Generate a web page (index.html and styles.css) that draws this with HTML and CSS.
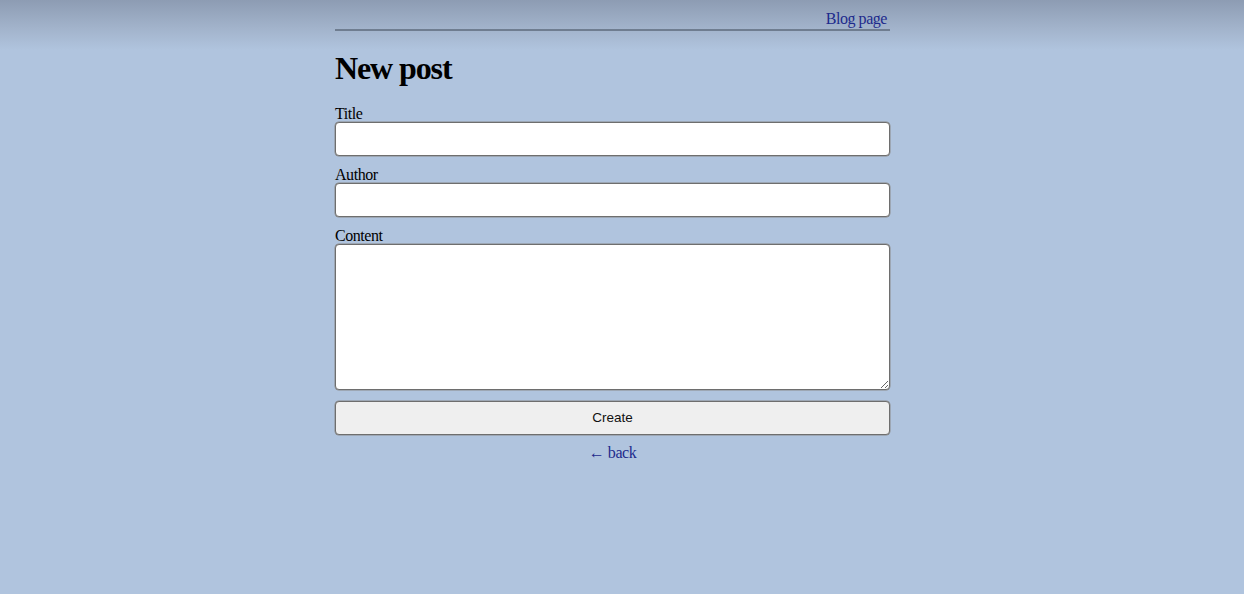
FILE: index.html
```html
<!DOCTYPE html>
<html>
<head>
<meta charset="utf-8">
<link rel="stylesheet" href="styles.css">
</head>
<body>
<div class="page">
  <header class="topbar">
    <a class="link" href="#">Blog page</a>
  </header>
  <h1 class="heading">New post</h1>
  <form class="form">
    <label class="label" for="title">Title</label>
    <input class="field" id="title" type="text">
    <label class="label" for="author">Author</label>
    <input class="field" id="author" type="text">
    <label class="label" for="content">Content</label>
    <textarea class="field area" id="content"></textarea>
    <button class="btn" type="button">Create</button>
  </form>
  <div class="back"><a class="link" href="#">← back</a></div>
</div>
</body>
</html>
```

FILE: styles.css
```css
html, body {
  margin: 0;
  padding: 0;
}
body {
  min-height: 594px;
  padding-right: 19px;
  background: linear-gradient(to bottom, #8d9cb3 0px, #a2b3cb 28px, #b0c4de 50px, #b0c4de 100%);
  font-family: "Liberation Serif", "Times New Roman", serif;
  font-size: 16px;
  letter-spacing: -0.45px;
  color: #000;
}
.page {
  width: 555px;
  margin: 0 auto;
  padding-top: 10px;
}
.topbar {
  display: flex;
  justify-content: flex-end;
  padding-right: 3px;
  padding-bottom: 1px;
  border-bottom: 2px solid #6f7d90;
  line-height: 18px;
}
.link {
  color: #1d2a8c;
  text-decoration: none;
}
.heading {
  margin: 19px 0 17px;
  font-size: 32px;
  font-weight: bold;
  letter-spacing: -1.1px;
  line-height: 37px;
}
.form {
  display: flex;
  flex-direction: column;
}
.label {
  padding-top: 1px;
  line-height: 17px;
}
.field {
  box-sizing: border-box;
  height: 34px;
  margin: 0 0 9px;
  border: 1px solid #6e6e6e;
  border-radius: 4px;
  background: #fff;
  box-shadow: 0 0 0 0.5px #8a8a8a;
  font: 16px "Liberation Serif", serif;
}
.area {
  height: 146px;
  margin-bottom: 11px;
  resize: vertical;
}
.btn {
  box-sizing: border-box;
  height: 34px;
  padding-bottom: 2px;
  border: 1px solid #6e6e6e;
  border-radius: 4px;
  background: #efefef;
  box-shadow: 0 0 0 0.5px #8a8a8a;
  font: 13.5px "Liberation Sans", Arial, sans-serif;
  letter-spacing: 0;
  color: #111;
}
.back {
  margin-top: 9px;
  text-align: center;
  line-height: 18px;
}
```
